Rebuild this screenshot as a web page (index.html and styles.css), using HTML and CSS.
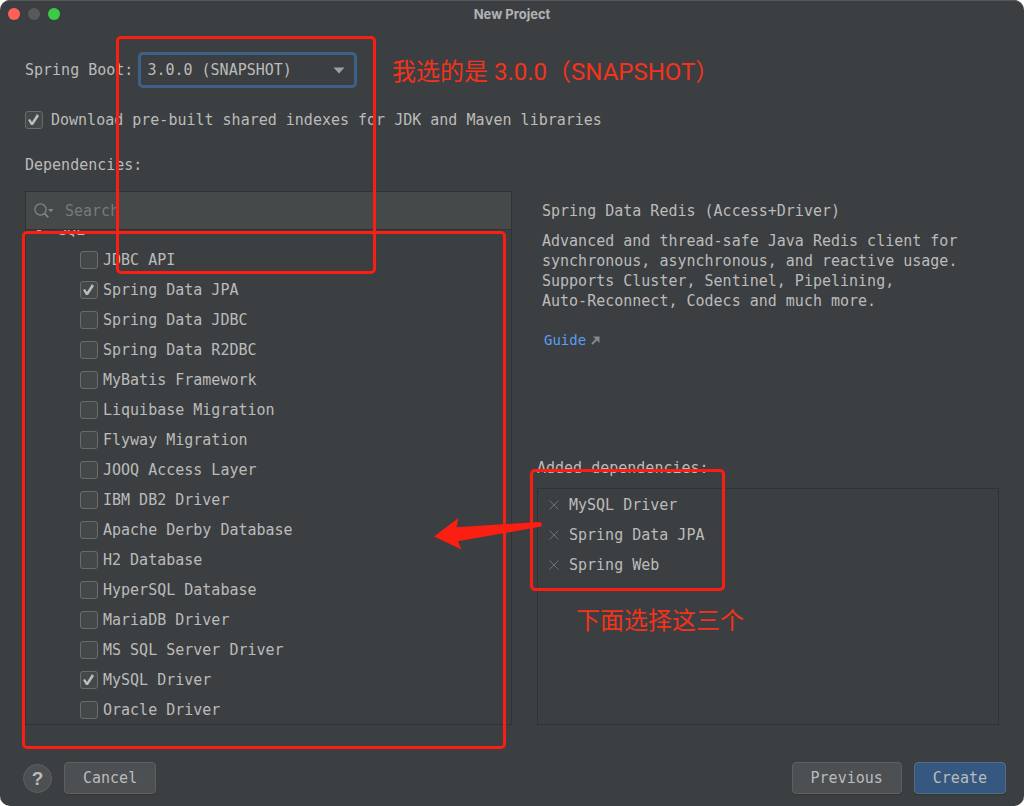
FILE: index.html
```html
<!DOCTYPE html>
<html lang="zh-CN">
<head>
<meta charset="utf-8">
<title>New Project</title>
<meta name="viewport" content="width=device-width, initial-scale=1">
<link rel="stylesheet" href="styles.css">
</head>
<body>
<div class="window">
  <header class="titlebar">
    <div class="lights"><span class="light close"></span><span class="light minimize"></span><span class="light zoom"></span></div>
    <h1 class="title">New Project</h1>
  </header>

  <main class="content">
    <div class="version">
      <label for="boot">Spring Boot:</label>
      <div class="select-wrap">
        <select id="boot" class="select"><option>3.0.0 (SNAPSHOT)</option></select>
        <svg class="select-arrow" width="12" height="7" viewBox="0 0 12 7" aria-hidden="true"><path d="M0.5 0.5h11L6 6.5z" fill="#9da0a2"/></svg>
      </div>
    </div>
    <label class="option indexes"><input type="checkbox" class="check" checked>Download pre-built shared indexes for JDK and Maven libraries</label>
    <div class="caption">Dependencies:</div>

    <div class="columns">
      <section class="browser">
        <div class="search">
          <svg width="20" height="16" viewBox="0 0 20 16" fill="none" aria-hidden="true"><circle cx="6.5" cy="6.5" r="5.6" stroke="#7d868c" stroke-width="1.3"/><path d="M10.7 10.7l3.6 3.6" stroke="#7d868c" stroke-width="1.8"/><path d="M14 6h5.5l-2.75 3.2z" fill="#7d868c"/></svg>
          <input class="search-input" type="text" placeholder="Search" aria-label="Search">
        </div>
        <div class="tree-view">
          <ul class="tree">
            <li class="group"><svg width="10" height="6" viewBox="0 0 10 6" fill="none" aria-hidden="true"><path d="M1 0.5l4 4 4-4" stroke="#adadad" stroke-width="1.5"/></svg>SQL</li>
            <li><label class="option"><input type="checkbox" class="check">JDBC API</label></li>
            <li><label class="option"><input type="checkbox" class="check" checked>Spring Data JPA</label></li>
            <li><label class="option"><input type="checkbox" class="check">Spring Data JDBC</label></li>
            <li><label class="option"><input type="checkbox" class="check">Spring Data R2DBC</label></li>
            <li><label class="option"><input type="checkbox" class="check">MyBatis Framework</label></li>
            <li><label class="option"><input type="checkbox" class="check">Liquibase Migration</label></li>
            <li><label class="option"><input type="checkbox" class="check">Flyway Migration</label></li>
            <li><label class="option"><input type="checkbox" class="check">JOOQ Access Layer</label></li>
            <li><label class="option"><input type="checkbox" class="check">IBM DB2 Driver</label></li>
            <li><label class="option"><input type="checkbox" class="check">Apache Derby Database</label></li>
            <li><label class="option"><input type="checkbox" class="check">H2 Database</label></li>
            <li><label class="option"><input type="checkbox" class="check">HyperSQL Database</label></li>
            <li><label class="option"><input type="checkbox" class="check">MariaDB Driver</label></li>
            <li><label class="option"><input type="checkbox" class="check">MS SQL Server Driver</label></li>
            <li><label class="option"><input type="checkbox" class="check" checked>MySQL Driver</label></li>
            <li><label class="option"><input type="checkbox" class="check">Oracle Driver</label></li>
          </ul>
        </div>
      </section>

      <section class="details">
        <div class="info">
          <h2 class="info-title">Spring Data Redis (Access+Driver)</h2>
          <p class="info-text">Advanced and thread-safe Java Redis client for synchronous, asynchronous, and reactive usage. Supports Cluster, Sentinel, Pipelining, <span class="nobreak">Auto-Reconnect,</span> Codecs and much more.</p>
          <a class="guide" href="#guide">Guide<svg width="9" height="9" viewBox="0 0 9 9" fill="none" aria-hidden="true"><path d="M1 8l5.5-5.5" stroke="#7f8b91" stroke-width="2"/><path d="M2 0.5h6.5V7L6 4.5 4.5 3z" fill="#7f8b91"/></svg></a>
        </div>
        <div class="caption">Added dependencies:</div>
        <ul class="added">
          <li><button class="remove" aria-label="Remove MySQL Driver"><svg width="10" height="10" viewBox="0 0 10 10"><path d="M0.5 0.5l9 9M9.5 0.5l-9 9" stroke="#6e7173"/></svg></button>MySQL Driver</li>
          <li><button class="remove" aria-label="Remove Spring Data JPA"><svg width="10" height="10" viewBox="0 0 10 10"><path d="M0.5 0.5l9 9M9.5 0.5l-9 9" stroke="#6e7173"/></svg></button>Spring Data JPA</li>
          <li><button class="remove" aria-label="Remove Spring Web"><svg width="10" height="10" viewBox="0 0 10 10"><path d="M0.5 0.5l9 9M9.5 0.5l-9 9" stroke="#6e7173"/></svg></button>Spring Web</li>
        </ul>
      </section>
    </div>
  </main>

  <footer class="footer">
    <button class="help" aria-label="Help">?</button>
    <button class="button">Cancel</button>
    <span class="spacer"></span>
    <button class="button">Previous</button>
    <button class="button primary">Create</button>
  </footer>

  <div class="mark mark-version"></div>
  <div class="mark mark-list"></div>
  <div class="mark mark-added"></div>
  <svg class="arrow" width="110" height="34" viewBox="0 0 110 34" aria-hidden="true"><path d="M0 18.5L24.5 0 22.5 9.3 104.5 4Q108 4 108 6.5 108 9 104.5 9L24 23.3 27.5 31.5z" fill="#fb1e12"/></svg>
  <p class="note note-version">我选的是 3.0.0（SNAPSHOT）</p>
  <p class="note note-added">下面选择这三个</p>
</div>
</body>
</html>
```
FILE: styles.css
```css
* { box-sizing: border-box; }
body {
  margin: 0;
  background: #fff;
  color: #bbb;
  font: 15px/20px "DejaVu Sans Mono", "Liberation Mono", monospace;
}
h1, h2, p, ul { margin: 0; padding: 0; font-weight: normal; }
ul { list-style: none; }
input, select, button { font: inherit; color: inherit; margin: 0; }

.window {
  position: relative;
  display: flex;
  flex-direction: column;
  min-height: 100vh;
  background: #3c3f41;
  border-radius: 10px;
  box-shadow: inset 0 1px #55585a;
  overflow: hidden;
}
.titlebar {
  display: grid;
  grid-template-columns: 1fr auto 1fr;
  align-items: center;
  height: 28px;
  padding: 0 8px;
}
.lights { display: flex; gap: 8px; }
.light { width: 12px; height: 12px; border-radius: 50%; }
.close { background: #ff6057; }
.minimize { background: #58595b; }
.zoom { background: #3ccb46; }
.title { font: bold 13px/16px Inter, "Liberation Sans", sans-serif; color: #b1b2b3; }

.content { flex: 1; display: flex; flex-direction: column; padding: 24px 25px 0; }
.version { display: flex; align-items: center; gap: 5px; }
.select-wrap { position: relative; }
.select {
  appearance: none;
  display: block;
  width: 219px;
  height: 36px;
  padding: 0 28px 0 6px;
  background: #3c3f41;
  border: 3px solid #3d6186;
  border-radius: 5px;
  outline: none;
}
.select-arrow { position: absolute; right: 12px; top: 15px; pointer-events: none; }

.option { display: flex; align-items: center; gap: 5px; }
.check {
  appearance: none;
  flex: none;
  width: 18px;
  height: 18px;
  background: #43494a;
  border: 1px solid #6b6b6b;
  border-radius: 3px;
}
.check:checked::after {
  content: "";
  display: block;
  width: 16px;
  height: 16px;
  background: #bdbdbd;
  clip-path: polygon(2px 8px, 4px 7px, 6px 10px, 11px 2px, 13px 4px, 7px 13px, 5px 13px);
}
.indexes { margin: 22px 0 25px; gap: 8px; }

.columns {
  flex: 1;
  display: grid;
  grid-template-columns: 487fr 462fr;
  gap: 25px;
  margin: 16px 0 0;
}
.browser { display: flex; flex-direction: column; border: 1px solid #323232; }
.search {
  display: flex;
  align-items: center;
  gap: 11px;
  height: 38px;
  padding: 0 8px;
  background: #45494a;
  border-bottom: 1px solid #323232;
}
.search-input { flex: 1; min-width: 0; padding: 0; background: none; border: 0; outline: none; }
.search-input::placeholder { color: #777a7b; opacity: 1; }
/* The list is scrolled so that its group row is partly hidden. */
.tree-view { flex: 1; overflow: hidden; }
.tree { margin: -15px 0 -1px; }
.tree li { display: flex; align-items: center; height: 30px; padding-left: 54px; }
.tree .group { gap: 14px; padding-left: 8px; }

.details { display: flex; flex-direction: column; }
.info { flex: 1; padding: 10px 16px 0 5px; }
.info-title { font-size: 15px; margin-bottom: 10px; }
.info-text { max-width: 430px; margin-bottom: 19px; }
.nobreak { white-space: nowrap; }
.guide {
  display: inline-flex;
  align-items: center;
  gap: 5px;
  margin-left: 2px;
  font-size: 14px;
  color: #589df6;
  text-decoration: none;
}
.added { flex: 0 0 237px; margin-top: 10px; padding-top: 1px; border: 1px solid #323232; }
.added li { display: flex; align-items: center; gap: 10px; height: 30px; padding-left: 11px; }
.remove { display: flex; padding: 0; background: none; border: 0; }

.footer { display: flex; align-items: center; gap: 12px; padding: 37px 18px 12px 23px; }
.spacer { flex: 1; }
.button {
  height: 32px;
  padding: 0 18px;
  background: #4c5052;
  border: 1px solid #5e6060;
  border-radius: 4px;
  box-shadow: 0 1px 1px #343638;
}
.primary { background: #365880; border-color: #4c708c; }
.help {
  width: 29px;
  height: 29px;
  padding: 0;
  background: #4c5052;
  border: 1px solid #5e6060;
  border-radius: 50%;
  font: bold 19px/27px "Liberation Sans", sans-serif;
}

/* Hand-drawn annotations laid over the dialog. */
.mark { position: absolute; border: 3px solid #fb1e12; border-radius: 5px; pointer-events: none; }
.mark-version { left: 116px; top: 36px; width: 260px; height: 238px; }
.mark-list { left: 22px; top: 231px; width: 484px; height: 518px; }
.mark-added { left: 530px; top: 469px; width: 195px; height: 122px; }
.arrow { position: absolute; left: 434px; top: 518px; pointer-events: none; }
.note {
  position: absolute;
  font: 24px/32px Roboto, "Noto Sans CJK SC", sans-serif;
  color: #f5321b;
  white-space: nowrap;
}
.note-version { left: 392px; top: 56px; }
.note-added { left: 576px; top: 605px; }
```
